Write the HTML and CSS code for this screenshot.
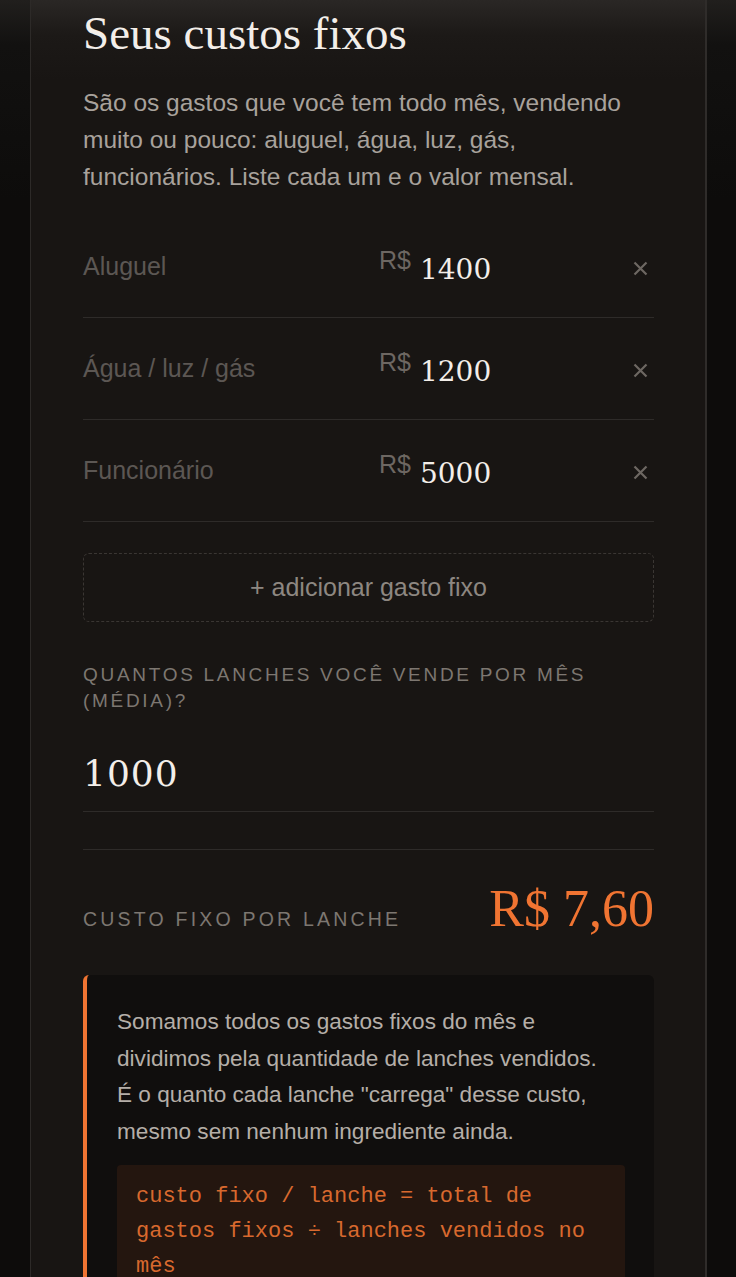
FILE: index.html
```html
<!DOCTYPE html>
<html lang="pt-BR">
<head>
<meta charset="utf-8">
<title>Seus custos fixos</title>
<link rel="stylesheet" href="styles.css">
</head>
<body>
<main class="card">
  <h2 class="title">Seus custos fixos</h2>
  <p class="desc">São os gastos que você tem todo mês, vendendo muito ou pouco: aluguel, água, luz, gás, funcionários. Liste cada um e o valor mensal.</p>

  <div class="rows">
    <div class="row">
      <span class="row-label">Aluguel</span>
      <span class="amount"><span class="cur">R$</span><span class="val">1400</span></span>
      <span class="del"><svg width="15" height="15" viewBox="0 0 15 15"><path d="M1.5 1.5 L13.5 13.5 M13.5 1.5 L1.5 13.5" stroke="currentColor" stroke-width="2.2" fill="none"/></svg></span>
    </div>
    <div class="row">
      <span class="row-label">Água / luz / gás</span>
      <span class="amount"><span class="cur">R$</span><span class="val">1200</span></span>
      <span class="del"><svg width="15" height="15" viewBox="0 0 15 15"><path d="M1.5 1.5 L13.5 13.5 M13.5 1.5 L1.5 13.5" stroke="currentColor" stroke-width="2.2" fill="none"/></svg></span>
    </div>
    <div class="row">
      <span class="row-label">Funcionário</span>
      <span class="amount"><span class="cur">R$</span><span class="val">5000</span></span>
      <span class="del"><svg width="15" height="15" viewBox="0 0 15 15"><path d="M1.5 1.5 L13.5 13.5 M13.5 1.5 L1.5 13.5" stroke="currentColor" stroke-width="2.2" fill="none"/></svg></span>
    </div>
  </div>

  <div class="add">+ adicionar gasto fixo</div>

  <div class="field-label">Quantos lanches você vende por mês (média)?</div>
  <div class="qty">1000</div>

  <div class="result">
    <span class="result-label">Custo fixo por lanche</span>
    <span class="result-val">R$ 7,60</span>
  </div>

  <div class="info">
    <p class="info-text">Somamos todos os gastos fixos do mês e dividimos pela quantidade de lanches vendidos. É o quanto cada lanche "carrega" desse custo, mesmo sem nenhum ingrediente ainda.</p>
    <div class="code">custo fixo / lanche = total de gastos fixos ÷ lanches vendidos no mês</div>
  </div>
</main>
</body>
</html>
```

FILE: styles.css
```css
html, body {
  margin: 0;
  padding: 0;
}
body {
  background: linear-gradient(#211f1d 0, #121110 45px, #0d0c0b 200px);
  min-height: 1277px;
  font-family: "Liberation Sans", Arial, sans-serif;
}
.card {
  margin: 0 29px 0 30px;
  border-left: 1px solid #2d2a28;
  border-right: 2px solid #2f2c2a;
  background: linear-gradient(#2a2725 0, #1c1917 35px, #181513 80px, #181513 100%);
  padding: 6px 51px 0 52px;
  min-height: 1277px;
  box-sizing: border-box;
}
.title {
  margin: 0;
  font-family: "Liberation Serif", "Times New Roman", serif;
  font-weight: normal;
  font-size: 47px;
  line-height: 55px;
  color: #f3eee9;
}
.desc {
  margin: 23px 0 0;
  font-size: 24.5px;
  line-height: 37px;
  color: #a8a29c;
}
.rows {
  margin-top: 21px;
}
.row {
  height: 101px;
  border-bottom: 1px solid #2e2b29;
  display: flex;
  align-items: center;
}
.row-label {
  flex: 1;
  font-size: 25px;
  color: #5c5753;
}
.amount {
  width: 230px;
  display: flex;
  align-items: center;
  gap: 9px;
}
.cur {
  font-size: 25px;
  color: #6d6762;
  margin-bottom: 12px;
}
.val {
  font-family: "DejaVu Serif", serif;
  font-size: 28px;
  color: #f3eee9;
  margin-top: 6px;
}
.del {
  width: 28px;
  margin-left: 17px;
  display: flex;
  justify-content: center;
  color: #6d6762;
  padding-top: 4px;
}
.add {
  margin-top: 31px;
  height: 69px;
  box-sizing: border-box;
  border: 1px dashed #3a3633;
  border-radius: 6px;
  display: flex;
  align-items: center;
  justify-content: center;
  font-size: 25px;
  color: #8d8781;
}
.field-label {
  margin-top: 40px;
  font-size: 19px;
  line-height: 26px;
  letter-spacing: 2.7px;
  text-transform: uppercase;
  color: #7d7771;
}
.qty {
  margin-top: 22px;
  height: 76px;
  box-sizing: border-box;
  border-bottom: 1px solid #2e2b29;
  display: flex;
  align-items: center;
  font-family: "DejaVu Serif", serif;
  font-size: 36px;
  letter-spacing: 1px;
  color: #f3eee9;
}
.result {
  margin-top: 37px;
  border-top: 1px solid #2e2b29;
  padding-top: 28px;
  display: flex;
  justify-content: space-between;
  align-items: baseline;
}
.result-label {
  font-size: 19.5px;
  letter-spacing: 3.2px;
  text-transform: uppercase;
  color: #7d7771;
}
.result-val {
  font-family: "Liberation Serif", "Times New Roman", serif;
  font-size: 52px;
  line-height: 61px;
  color: #f07432;
}
.info {
  margin-top: 36px;
  background: #100e0d;
  border-left: 4px solid #f07432;
  border-radius: 6px;
  padding: 29px 29px 20px 30px;
}
.info-text {
  margin: 0;
  padding-right: 10px;
  font-size: 22.6px;
  line-height: 36.5px;
  color: #b5aea8;
}
.code {
  margin-top: 15px;
  background: #24160f;
  border-radius: 4px;
  padding: 14px 19px;
  font-family: "Liberation Mono", "Courier New", monospace;
  font-size: 22px;
  line-height: 35px;
  color: #d8692e;
}
```
